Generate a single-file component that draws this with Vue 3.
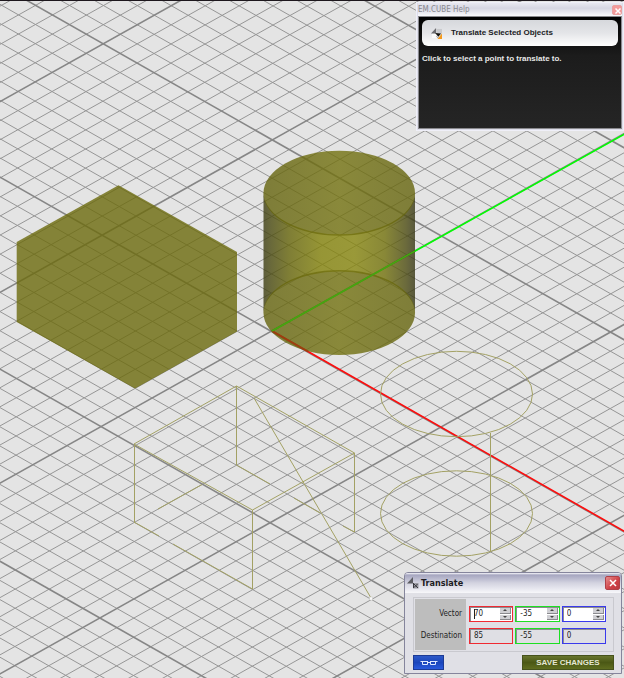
<script setup>
import { ref } from 'vue'

const origin = { x: 271.2, y: 331.3 }
const stepA = { x: 16.91, y: 9.61 }
const stepB = { x: 17.02, y: -9.53 }
const span = 60

function makeLines(along, across) {
  const lines = []
  for (let k = -span; k <= span; k++) {
    const x = origin.x + across.x * k
    const y = origin.y + across.y * k
    lines.push({
      major: k % 10 === 0,
      x1: x - along.x * span,
      y1: y - along.y * span,
      x2: x + along.x * span,
      y2: y + along.y * span,
    })
  }
  return lines
}

const gridLines = [...makeLines(stepA, stepB), ...makeLines(stepB, stepA)]
const minorLines = gridLines.filter((l) => !l.major)
const majorLines = gridLines.filter((l) => l.major)

const axes = ref([
  { name: 'x', vector: 70, destination: 85 },
  { name: 'y', vector: -35, destination: -55 },
  { name: 'z', vector: 0, destination: 0 },
])

function nudge(axis, amount) {
  axis.vector = Number(axis.vector) + amount
  axis.destination = Number(axis.destination) + amount
}
</script>

<template>
  <main class="viewport">
    <svg class="scene" viewBox="0 0 624 678" preserveAspectRatio="xMidYMid slice" aria-hidden="true">
      <defs>
        <linearGradient id="side" x1="0" x2="1" y1="0" y2="0">
          <stop offset="0" stop-color="#3c3c12" />
          <stop offset="0.05" stop-color="#4b4b10" />
          <stop offset="0.17" stop-color="#66650a" />
          <stop offset="0.38" stop-color="#83820a" />
          <stop offset="0.6" stop-color="#87860e" />
          <stop offset="0.8" stop-color="#72710c" />
          <stop offset="0.94" stop-color="#4d4c12" />
          <stop offset="1" stop-color="#363614" />
        </linearGradient>
        <linearGradient id="cap" x1="0" x2="1" y1="0" y2="0">
          <stop offset="0" stop-color="#64630e" />
          <stop offset="0.5" stop-color="#737210" />
          <stop offset="1" stop-color="#65640e" />
        </linearGradient>
      </defs>

      <g class="minor">
        <line v-for="(l, i) in minorLines" :key="i" :x1="l.x1" :y1="l.y1" :x2="l.x2" :y2="l.y2" />
      </g>
      <g class="major">
        <line v-for="(l, i) in majorLines" :key="i" :x1="l.x1" :y1="l.y1" :x2="l.x2" :y2="l.y2" />
      </g>

      <line class="axis-x" x1="272" y1="331" x2="972" y2="729" />
      <line class="axis-y" x1="272" y1="331" x2="972" y2="-60" />

      <polygon class="box" points="118.5,185.3 237,252 237,331.5 135,388.5 16.7,322 16.7,242" />

      <path
        d="M263.5 193.3A75.8 42.5 0 0 0 415 193.3V312.5A75.8 42.5 0 0 0 263.5 312.5Z"
        fill="url(#side)"
        fill-opacity="0.8"
      />
      <ellipse cx="339.25" cy="193.3" rx="75.8" ry="42.5" fill="url(#cap)" fill-opacity="0.8" />
      <ellipse cx="339.25" cy="312.5" rx="75.8" ry="42.5" fill="url(#cap)" fill-opacity="0.8" />
      <line class="axis-x-inside" x1="272" y1="331" x2="308" y2="351.5" />
      <line class="axis-y-inside" x1="272" y1="331" x2="415" y2="251" />

      <g class="wire">
        <path d="M236.5 386L134 444L252.5 510L354.5 453Z" />
        <path d="M236.5 386V465M134.5 444V522M252.5 510V589M354.5 453V532" />
        <path d="M134 522L159 536M173 544L252.5 589M236.5 465L270 484M294 498L320 513M343 526L354.5 532" />
        <path d="M158 509L202 484.5" />
        <path d="M254 398L371 598" />
        <ellipse cx="456.5" cy="394" rx="76" ry="42.7" />
        <ellipse cx="456.5" cy="513.5" rx="76" ry="42.7" />
        <path d="M490.5 433V551" />
      </g>
      <rect x="369.5" y="597" width="3" height="3" fill="#fafafa" stroke="#c4c4c0" stroke-width="0.5" />
    </svg>

    <section class="help" aria-labelledby="help-title">
      <header class="help-bar">
        <h2 id="help-title">EM.CUBE Help</h2>
        <button class="close faded" type="button" aria-label="Close help">
          <svg viewBox="0 0 10 10"><path d="M2.5 2.5L7.5 7.5M7.5 2.5L2.5 7.5" /></svg>
        </button>
      </header>
      <div class="help-body">
        <div class="help-card">
          <svg class="help-icon" viewBox="0 0 12 12" aria-hidden="true">
            <rect x="1" y="6" width="5" height="5" fill="#fafafa" />
            <rect x="6" y="1" width="6" height="5" fill="#c9cacd" />
            <path d="M0 6L5.5 0V6Z" fill="#6c6c70" />
            <path d="M7 12L12 6V12Z" fill="#f39a1e" />
            <path d="M4.500 5.500L11 6L8 9.500Z" fill="#15130e" />
            <path d="M6 9L8 11" stroke="#8c8c90" />
          </svg>
          <strong>Translate Selected Objects</strong>
        </div>
        <p>Click to select a point to translate to.</p>
      </div>
    </section>

    <form class="dialog" aria-labelledby="dialog-title" @submit.prevent>
      <header class="dialog-bar">
        <svg class="dialog-icon" viewBox="0 0 12 12" aria-hidden="true">
          <path d="M0 6.500L6 0V6.500Z" fill="#5c5c62" />
          <path d="M6 6H11.500V11.500H6Z" fill="#9a9aa2" />
          <path d="M6 6L11 11M7 10.500L10.500 7M6.500 7V11" stroke="#38383e" fill="none" />
        </svg>
        <h1 id="dialog-title">Translate</h1>
        <button class="close" type="button" aria-label="Close">
          <svg viewBox="0 0 10 10"><path d="M2 2L8 8M8 2L2 8" /></svg>
        </button>
      </header>

      <div class="fields">
        <div class="labels">
          <label for="vector-x">Vector</label>
          <label for="destination-x">Destination</label>
        </div>
        <div class="values">
          <div v-for="axis in axes" :key="axis.name" class="spin" :class="axis.name">
            <input :id="'vector-' + axis.name" v-model="axis.vector" type="text" :aria-label="'Vector ' + axis.name" />
            <span v-if="axis.name === 'x'" class="caret"></span>
            <span class="steps">
              <button type="button" aria-label="Increase" @click="nudge(axis, 1)">
                <svg viewBox="0 0 4 2"><path d="M0 2L2 0L4 2Z" /></svg>
              </button>
              <button type="button" aria-label="Decrease" @click="nudge(axis, -1)">
                <svg viewBox="0 0 4 2"><path d="M0 0L2 2L4 0Z" /></svg>
              </button>
            </span>
          </div>
          <div v-for="axis in axes" :key="'d' + axis.name" class="spin total" :class="axis.name">
            <input
              :id="'destination-' + axis.name"
              :value="axis.destination"
              type="text"
              readonly
              :aria-label="'Destination ' + axis.name"
            />
          </div>
        </div>
      </div>

      <footer class="actions">
        <button class="link" type="button" aria-label="Link values">
          <svg viewBox="0 0 18 6"><path d="M2.5 1V4.5H7.5V1.5M10.5 1.5V4.5H15.5V1M0.5 1.5H8M10 1.5H17.5M7 2.5H11" /></svg>
        </button>
        <button class="save" type="submit">SAVE CHANGES</button>
      </footer>
    </form>
  </main>
</template>

<style>
body {
  margin: 0;
}
</style>

<style scoped>
.viewport {
  position: relative;
  box-sizing: border-box;
  height: 100vh;
  overflow: hidden;
  background: #e4e4e4;
  font-family: "DejaVu Sans Condensed", "Noto Sans", sans-serif;
}
.viewport::before {
  content: "";
  position: absolute;
  inset: 0 0 auto;
  height: 1px;
  background: #1d171d;
}
.scene {
  display: block;
  width: 100%;
  height: 100%;
}
.minor line {
  stroke: #969696;
  stroke-width: 1;
}
.major line {
  stroke: #868686;
  stroke-width: 1.6;
}
.axis-x {
  stroke: #ff0c0c;
  stroke-width: 1.6;
}
.axis-y {
  stroke: #00ff00;
  stroke-width: 1.6;
}
.axis-x-inside {
  stroke: #a03c10;
  stroke-width: 1.6;
}
.axis-y-inside {
  stroke: #45a512;
  stroke-width: 1.6;
}
.box {
  fill: #6c6a0c;
  fill-opacity: 0.8;
}
.wire {
  fill: none;
  stroke: #a3a164;
  stroke-width: 1;
}
button,
input {
  margin: 0;
  padding: 0;
  border: 0;
  font: inherit;
}
h1,
h2,
p {
  margin: 0;
}

.help {
  position: absolute;
  top: 2px;
  right: 0;
  box-sizing: border-box;
  width: 208px;
  padding: 1px 2px 2px;
  background: #dddde9;
  box-shadow: inset 0 0 0 1px #efeff8;
}
.help-bar {
  display: flex;
  align-items: center;
  justify-content: space-between;
  height: 13px;
  background: linear-gradient(#e8e8f0, #d6d6e2 40%, #fafafc);
}
.help-bar h2 {
  color: #88888e;
  font-size: 8px;
  line-height: 13px;
  font-weight: 400;
}
.close {
  display: grid;
  place-items: center;
  width: 15px;
  height: 14px;
  border: 1px solid #b04048;
  border-radius: 2px;
  background: linear-gradient(135deg, #e58c8c, #cf3f46 60%, #b93a40);
}
.close svg {
  width: 10px;
  height: 10px;
}
.close path {
  stroke: #fff;
  stroke-width: 1.5;
  fill: none;
}
.close.faded {
  width: 10px;
  height: 10px;
  border-color: #e9a0a0;
  background: #f39a9a;
}
.help-body {
  box-sizing: border-box;
  min-height: 113px;
  padding: 3px;
  border: 1px solid #8a8a8e;
  background: linear-gradient(#020202, #1c1c1c 35%, #252525);
  font-family: "Liberation Sans", sans-serif;
  font-size: 8px;
  line-height: 10px;
}
.help-card {
  display: flex;
  align-items: center;
  gap: 9px;
  height: 26px;
  padding-left: 9px;
  border-radius: 6px;
  background: linear-gradient(#d6d8dc, #e4e5e8 50%, #fff);
  color: #1c1c24;
}
.help-icon {
  width: 11px;
  height: 11px;
}
.help-body p {
  margin-top: 8px;
  color: #e8e8e8;
  font-weight: 700;
}

.dialog {
  position: absolute;
  right: 2px;
  bottom: 4px;
  box-sizing: border-box;
  width: 218px;
  padding: 0 7px 3px 8px;
  border: 1px solid #85859c;
  border-radius: 4px 4px 0 0;
  background: #e0e0e6;
  font-size: 8px;
}
.dialog-bar {
  display: flex;
  align-items: center;
  height: 20px;
  margin: 0 -7px 4px -8px;
  padding: 0 1px 0 2px;
  border-radius: 3px 3px 0 0;
  background: linear-gradient(#f8f8fc, #a6a6c0 10%, #d3d3e0 50%, #f7f7fa);
}
.dialog-icon {
  width: 12px;
  height: 12px;
}
.dialog-bar h1 {
  flex: 1;
  margin-left: 2px;
  color: #1c1c22;
  font-size: 9px;
  line-height: 12px;
  font-weight: 700;
}
.fields {
  display: flex;
  box-sizing: border-box;
  height: 55px;
  padding: 1px;
  border: 1px solid #c9c9cf;
}
.labels {
  display: grid;
  grid-template-rows: 16px 16px;
  gap: 6px;
  box-sizing: border-box;
  width: 51px;
  padding: 7px 4px;
  background: #bdbdbd;
  color: #1e1e1e;
  line-height: 16px;
  text-align: right;
}
.labels label {
  justify-self: end;
}
.values {
  display: grid;
  flex: 1;
  grid-template-columns: repeat(3, 1fr);
  grid-template-rows: 16px 16px;
  gap: 6px 2px;
  padding: 7px 6px 7px 3px;
}
.spin {
  position: relative;
  display: flex;
  box-sizing: border-box;
  min-width: 0;
  padding: 1px;
  border: 1px solid;
  background: #fff;
  box-shadow: inset 1px 1px 0 #8c8c90;
}
.spin.total {
  background: #dfdfe4;
}
.spin.x {
  border-color: #f02a32;
}
.spin.y {
  border-color: #1ce022;
}
.spin.z {
  border-color: #3a3aec;
}
.spin input {
  flex: 1;
  min-width: 0;
  padding-left: 3px;
  background: transparent;
  color: #1e1e1e;
  line-height: 12px;
  outline: 0;
}
.caret {
  position: absolute;
  top: 2px;
  left: 4px;
  width: 1px;
  height: 10px;
  background: #222;
}
.steps {
  display: grid;
  grid-template-rows: 1fr 1fr;
  gap: 1px;
  width: 11px;
}
.steps button {
  display: grid;
  place-items: center;
  border-right: 1px solid #8a8a8e;
  border-bottom: 1px solid #8a8a8e;
  background: #d0d0d4;
}
.steps svg {
  display: block;
  width: 4px;
  height: 2px;
}
.steps path {
  fill: #444;
}
.actions {
  display: flex;
  justify-content: space-between;
  margin-top: 3px;
}
.actions button {
  display: grid;
  place-items: center;
  height: 15px;
}
.actions .link {
  width: 31px;
  border: 1px solid #1c3a94;
  background: linear-gradient(#2c58c8, #1a45bb 50%, #2a5ade);
}
.link svg {
  width: 18px;
  height: 6px;
}
.link path {
  fill: none;
  stroke: #dfe8ff;
}
.actions .save {
  width: 92px;
  border: 1px solid #46521c;
  background: linear-gradient(#68752e, #4b5815 50%, #5f6d20);
  color: #e6e8d4;
  font-family: "Liberation Sans", sans-serif;
  font-size: 8px;
  line-height: 12px;
  font-weight: 700;
}
</style>
